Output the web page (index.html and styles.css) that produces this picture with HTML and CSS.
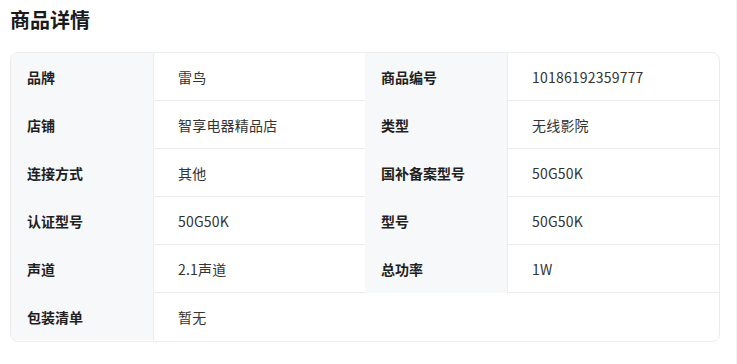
FILE: index.html
```html
<!DOCTYPE html>
<html lang="zh-CN">
<head>
<meta charset="utf-8">
<title>商品详情</title>
<link rel="stylesheet" href="styles.css">
</head>
<body>
<div class="page">
  <h2 class="title">商品详情</h2>
  <div class="specs">
    <div class="label">品牌</div><div class="value">雷鸟</div>
    <div class="label">商品编号</div><div class="value">10186192359777</div>
    <div class="label">店铺</div><div class="value">智享电器精品店</div>
    <div class="label">类型</div><div class="value">无线影院</div>
    <div class="label">连接方式</div><div class="value">其他</div>
    <div class="label">国补备案型号</div><div class="value">50G50K</div>
    <div class="label">认证型号</div><div class="value">50G50K</div>
    <div class="label">型号</div><div class="value">50G50K</div>
    <div class="label">声道</div><div class="value">2.1声道</div>
    <div class="label">总功率</div><div class="value">1W</div>
    <div class="label last">包装清单</div><div class="value wide last">暂无</div>
  </div>
</div>
</body>
</html>
```

FILE: styles.css
```css
html, body {
  margin: 0;
  padding: 0;
  background: #ffffff;
}
body {
  font-family: "Noto Sans CJK SC", "Noto Sans", sans-serif;
  color: #333333;
}
.page {
  box-sizing: border-box;
  min-height: 364px;
  padding: 6px 16px 0 10px;
  border-right: 1px solid #f3f3f3;
}
.title {
  margin: 0 0 18px;
  font-size: 20px;
  line-height: 28px;
  font-weight: 700;
  color: #1a1a1a;
}
.specs {
  display: grid;
  grid-template-columns: 143px 211px 143px 1fr;
  grid-auto-rows: 48px;
  border: 1px solid #ececec;
  border-radius: 8px;
  overflow: hidden;
  font-size: 14px;
}
.label {
  display: flex;
  align-items: center;
  padding-left: 16px;
  background: #f7f8fa;
  border-right: 1px solid #ececec;
  font-weight: 700;
  color: #1f1f1f;
}
.value {
  display: flex;
  align-items: center;
  padding-left: 24px;
  border-bottom: 1px solid #ececec;
  color: #333333;
  letter-spacing: 0.2px;
}
.value.wide {
  grid-column: span 3;
}
.last {
  height: 47px;
  border-bottom: none;
}
```
